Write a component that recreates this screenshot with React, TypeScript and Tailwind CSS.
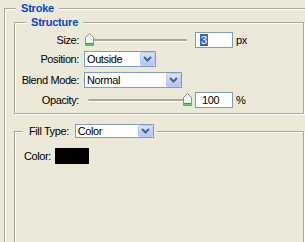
import type { ReactNode } from "react";

function Chevron() {
  return (
    <svg width="9" height="6" viewBox="0 0 9 6">
      <path d="M1 1 L4.5 4.5 L8 1" fill="none" stroke="#4D6185" strokeWidth="2" />
    </svg>
  );
}

function Select({ value, className }: { value: string; className: string }) {
  return (
    <div className={`flex items-center bg-white border border-[#7F9DB9] ${className}`}>
      <span className="flex-1 pl-[2px] leading-none">{value}</span>
      <div className="w-[15px] h-full flex items-center justify-center rounded-[2px] border border-[#BACBF5] bg-gradient-to-b from-[#D6E2FE] to-[#B2C6F4]">
        <Chevron />
      </div>
    </div>
  );
}

function Thumb() {
  return (
    <svg width="9" height="13" viewBox="0 0 9 13">
      <path d="M0.5 12.5 V4.5 L4.5 0.5 L8.5 4.5 V12.5 Z" fill="#F4F4F0" stroke="#8E8D86" />
      <path d="M1 10.5 H8" stroke="#2FA82F" />
      <path d="M1 11.5 H8" stroke="#5ED65E" />
    </svg>
  );
}

function Slider({ left }: { left: string }) {
  return (
    <div className="relative w-[110px] h-[16px]">
      <div className="absolute left-[4px] top-[7px] w-[99px] h-[2px] rounded-full bg-[#A9A79B] shadow-[0_1px_0_#fff]" />
      <div className={`absolute top-[1px] ${left}`}>
        <Thumb />
      </div>
    </div>
  );
}

function Row({ label, className, children }: { label: string; className: string; children: ReactNode }) {
  return (
    <div className={`flex items-center h-[16px] ${className}`}>
      <div className="w-[64px] text-right">{label}</div>
      <div className="ml-[5px] flex items-center">{children}</div>
    </div>
  );
}

const box = "border border-[#ACA899] shadow-[inset_1px_1px_0_#fff,1px_1px_0_#fff]";
const title = "h-[15px] leading-[15px] px-[5px] font-bold text-[#0046D5] bg-[#ECE9D8] tracking-[-0.2px]";

export default function App() {
  return (
    <div className="w-[305px] h-[242px] overflow-hidden bg-[#ECE9D8] pt-[1px] font-['Liberation_Sans',Arial,sans-serif] text-[11px] text-black tracking-[-0.4px]">
      <fieldset className={`ml-[4px] w-[320px] h-[280px] ${box}`}>
        <legend className={`ml-[11px] ${title}`}>Stroke</legend>

        <fieldset className={`-mt-[1px] ml-[9px] w-[290px] pb-[5px] ${box}`}>
          <legend className={`ml-[11px] ${title}`}>Structure</legend>

          <Row label="Size:" className="mt-[2px]">
            <Slider left="left-[1px]" />
            <div className="ml-[1px] w-[38px] h-[16px] border border-[#7F9DB9] bg-white flex items-center pl-[4px]">
              <span className="bg-[#316AC5] text-white leading-[12px] px-[1px]">3</span>
            </div>
            <span className="ml-[3px]">px</span>
          </Row>

          <Row label="Position:" className="mt-[3px]">
            <Select value="Outside" className="w-[72px] h-[16px]" />
          </Row>

          <Row label="Blend Mode:" className="mt-[5px]">
            <Select value="Normal" className="w-[98px] h-[16px]" />
          </Row>

          <Row label="Opacity:" className="mt-[4px]">
            <Slider left="left-[99px]" />
            <div className="ml-[1px] w-[38px] h-[16px] border border-[#7F9DB9] bg-white flex items-center pl-[6px]">
              100
            </div>
            <span className="ml-[3px]">%</span>
          </Row>
        </fieldset>

        <fieldset className={`mt-[10px] ml-[9px] w-[290px] h-[200px] ${box}`}>
          <legend className="ml-[8px] pl-[6px] pr-[3px] h-[14px] bg-[#ECE9D8]">
            <div className="flex items-center h-[14px]">
              <span>Fill Type:</span>
              <Select value="Color" className="ml-[6px] w-[79px] h-[14px]" />
            </div>
          </legend>

          <div className="mt-[10px] pl-[9px] flex items-center">
            <span>Color:</span>
            <div className="ml-[4px] w-[34px] h-[16px] bg-[#050000]" />
          </div>
        </fieldset>
      </fieldset>
    </div>
  );
}
